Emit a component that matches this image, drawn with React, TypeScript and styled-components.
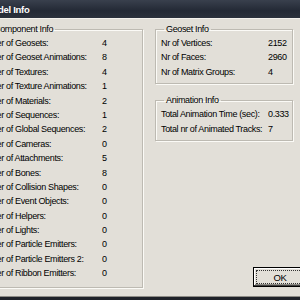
import styled, { createGlobalStyle } from 'styled-components'

const GlobalStyle = createGlobalStyle`
  html, body {
    margin: 0;
    padding: 0;
    background: #e2dfd8;
    overflow: hidden;
  }
  body {
    font-family: 'Liberation Sans', Arial, sans-serif;
  }
`

const Window = styled.div`
  width: 300px;
  height: 300px;
  overflow: hidden;
  display: flex;
  flex-direction: column;
  background: #e2dfd8;
  color: #000;
`

const TitleBar = styled.div`
  height: 18px;
  flex-shrink: 0;
  display: flex;
  align-items: center;
  background: linear-gradient(#39404d, #232935 60%, #2b313c);
  border-bottom: 1px solid #f3f1ec;
  color: #fff;
  font-size: 9.5px;
  font-weight: bold;
  letter-spacing: -0.3px;
`

const TitleText = styled.span`
  margin-left: -15px;
  white-space: nowrap;
`

const Body = styled.div`
  flex: 1;
  display: flex;
  gap: 12px;
  padding: 5px 0 0;
  margin-left: -40px;
`

const LeftColumn = styled.div`
  width: 183px;
  flex-shrink: 0;
`

const RightColumn = styled.div`
  width: 138px;
  flex-shrink: 0;
  display: flex;
  flex-direction: column;
  gap: 11px;
  padding-bottom: 9px;
`

const Group = styled.fieldset<{ $indent: number; $legendIndent: number; $bottom: number }>`
  margin: 0;
  padding: 1px 0 ${(p) => p.$bottom}px ${(p) => p.$indent}px;
  border: 1px solid #bdbab2;
  box-shadow: 1px 1px 0 #fbfaf6, inset 1px 1px 0 #fbfaf6;
  font-size: 9px;
  letter-spacing: -0.35px;

  & > legend {
    margin-left: ${(p) => p.$legendIndent}px;
    padding: 0 2px;
    line-height: 11px;
    white-space: nowrap;
  }
`

const Row = styled.div<{ $labelWidth: number }>`
  display: grid;
  grid-template-columns: ${(p) => p.$labelWidth}px auto;
  height: 14.4px;
  line-height: 14px;
  white-space: nowrap;
`

const ButtonRow = styled.div`
  margin-top: auto;
  display: flex;
  justify-content: flex-end;
  margin-right: -14px;
`

const OkButton = styled.button`
  width: 54px;
  height: 20px;
  padding: 2px;
  border: 1px solid #000;
  background: #e2dfd8;
  box-shadow: inset -1px -1px 0 #404040, inset 1px 1px 0 #ffffff,
    inset -2px -2px 0 #8c8a84;
  font-family: 'Liberation Sans', Arial, sans-serif;
  font-size: 9.5px;
  letter-spacing: -0.3px;
  color: #000;
  cursor: default;
`

const FocusRing = styled.span`
  display: flex;
  align-items: center;
  justify-content: center;
  height: 100%;
  border: 1px dotted #333;
  box-sizing: border-box;
`

const BottomEdge = styled.div`
  height: 3px;
  flex-shrink: 0;
  background: #1f2229;
  border-top: 1px solid #8e8c86;
`

const componentRows: [string, string][] = [
  ['Number of Geosets:', '4'],
  ['Number of Geoset Animations:', '8'],
  ['Number of Textures:', '4'],
  ['Number of Texture Animations:', '1'],
  ['Number of Materials:', '2'],
  ['Number of Sequences:', '1'],
  ['Number of Global Sequences:', '2'],
  ['Number of Cameras:', '0'],
  ['Number of Attachments:', '5'],
  ['Number of Bones:', '8'],
  ['Number of Collision Shapes:', '0'],
  ['Number of Event Objects:', '0'],
  ['Number of Helpers:', '0'],
  ['Number of Lights:', '0'],
  ['Number of Particle Emitters:', '0'],
  ['Number of Particle Emitters 2:', '0'],
  ['Number of Ribbon Emitters:', '0'],
]

const geosetRows: [string, string][] = [
  ['Nr of Vertices:', '2152'],
  ['Nr of Faces:', '2960'],
  ['Nr of Matrix Groups:', '4'],
]

const animationRows: [string, string][] = [
  ['Total Animation Time (sec):', '0.333'],
  ['Total nr of Animated Tracks:', '7'],
]

function InfoRows({ rows, labelWidth }: { rows: [string, string][]; labelWidth: number }) {
  return (
    <>
      {rows.map(([label, value]) => (
        <Row key={label} $labelWidth={labelWidth}>
          <span>{label}</span>
          <span>{value}</span>
        </Row>
      ))}
    </>
  )
}

function App() {
  return (
    <>
      <GlobalStyle />
      <Window>
        <TitleBar>
          <TitleText>Model Info</TitleText>
        </TitleBar>
        <Body>
          <LeftColumn>
            <Group $indent={13} $legendIndent={18} $bottom={6}>
              <legend>Component Info</legend>
              <InfoRows rows={componentRows} labelWidth={128} />
            </Group>
          </LeftColumn>
          <RightColumn>
            <Group $indent={5} $legendIndent={3} $bottom={4}>
              <legend>Geoset Info</legend>
              <InfoRows rows={geosetRows} labelWidth={107} />
            </Group>
            <Group $indent={5} $legendIndent={3} $bottom={4}>
              <legend>Animation Info</legend>
              <InfoRows rows={animationRows} labelWidth={107} />
            </Group>
            <ButtonRow>
              <OkButton>
                <FocusRing>OK</FocusRing>
              </OkButton>
            </ButtonRow>
          </RightColumn>
        </Body>
        <BottomEdge />
      </Window>
    </>
  )
}

export default App
